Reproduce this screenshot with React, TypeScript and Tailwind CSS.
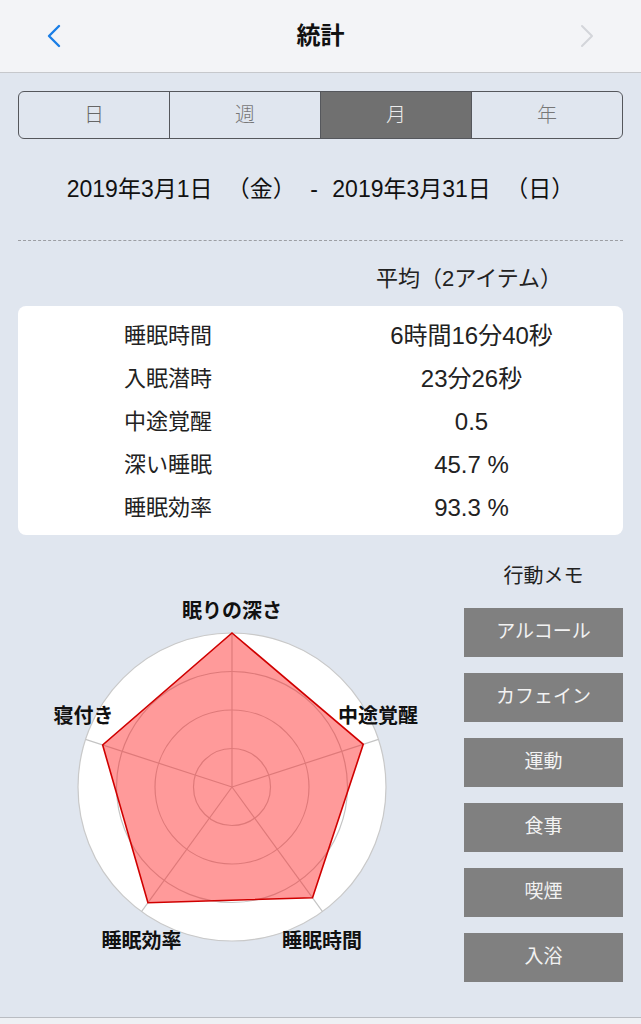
import React from "react";

const rows = [
  ["睡眠時間", "6時間16分40秒"],
  ["入眠潜時", "23分26秒"],
  ["中途覚醒", "0.5"],
  ["深い睡眠", "45.7 %"],
  ["睡眠効率", "93.3 %"],
];

const memos = ["アルコール", "カフェイン", "運動", "食事", "喫煙", "入浴"];

// radar geometry (svg coords)
const CX = 214;
const CY = 252;
const R = 154;
const angles = [0, 72, 144, 216, 288];
const values = [154, 138, 137, 143, 136];

function pt(a: number, r: number) {
  const rad = (a * Math.PI) / 180;
  return [CX + r * Math.sin(rad), CY - r * Math.cos(rad)];
}

function Radar() {
  const poly = angles.map((a, i) => pt(a, values[i]).join(",")).join(" ");
  return (
    <svg width="445" height="482" viewBox="0 0 445 482" className="block">
      <circle cx={CX} cy={CY} r={R} fill="#ffffff" stroke="#c9c9c9" strokeWidth="1.2" />
      {[38.5, 77, 115.5].map((r) => (
        <circle key={r} cx={CX} cy={CY} r={r} fill="none" stroke="#c4c4c4" strokeWidth="1.2" />
      ))}
      {angles.map((a) => {
        const [x, y] = pt(a, R);
        return <line key={a} x1={CX} y1={CY} x2={x} y2={y} stroke="#c4c4c4" strokeWidth="1.2" />;
      })}
      <polygon points={poly} fill="rgba(255,30,30,0.45)" stroke="#d00000" strokeWidth="1.6" strokeLinejoin="miter" />
      <g fontSize="20" fontWeight="700" fill="#111" textAnchor="middle" dominantBaseline="central">
        <text x="214" y="76">眠りの深さ</text>
        <text x="360" y="181">中途覚醒</text>
        <text x="65.5" y="181">寝付き</text>
        <text x="123.5" y="406">睡眠効率</text>
        <text x="304" y="406">睡眠時間</text>
      </g>
    </svg>
  );
}

export default function App() {
  return (
    <div className="w-[641px] h-[1024px] overflow-hidden bg-[#e0e6ef] font-['Liberation_Sans','Noto_Sans_CJK_JP',sans-serif] text-[#111]">
      {/* Nav bar */}
      <div className="h-[73px] bg-[#f3f4f7] border-b border-[#c6c8cc] flex items-center justify-between px-[46px]">
        <svg width="16" height="24" viewBox="0 0 16 24">
          <polyline points="13,2 3,12 13,22" fill="none" stroke="#1a7ee6" strokeWidth="2.4" strokeLinecap="round" strokeLinejoin="round" />
        </svg>
        <div className="text-[24px] font-bold leading-none">統計</div>
        <svg width="16" height="24" viewBox="0 0 16 24">
          <polyline points="3,2 13,12 3,22" fill="none" stroke="#d3d5da" strokeWidth="2" strokeLinecap="round" strokeLinejoin="round" />
        </svg>
      </div>

      <div className="px-[18px]">
        {/* Segmented control */}
        <div className="mt-[18px] h-[48px] flex rounded-[6px] border-[1.5px] border-[#55575c] overflow-hidden text-[20px] font-light">
          <div className="flex-1 flex items-center justify-center text-[#666]">日</div>
          <div className="flex-1 flex items-center justify-center text-[#777] border-l-[1.5px] border-[#55575c]">週</div>
          <div className="flex-1 flex items-center justify-center text-[#ececec] bg-[#707070] border-l-[1.5px] border-[#55575c]">月</div>
          <div className="flex-1 flex items-center justify-center text-[#777] border-l-[1.5px] border-[#55575c]">年</div>
        </div>

        {/* Date range */}
        <div className="h-[101px] flex items-center justify-center text-[23px] [word-spacing:8px]">
          2019年3月1日 （金） - 2019年3月31日 （日）
        </div>

        <div className="border-t border-dashed border-[#9c9ea3]" />

        <div className="pt-[26px] leading-[24px] text-[22px] text-[#222] pl-[358px]">平均（2アイテム）</div>

        {/* Stats card */}
        <div className="mt-[15px] bg-white rounded-[8px] pt-[8px] pb-[6px] text-[22px] text-[#222]">
          {rows.map(([k, v]) => (
            <div key={k} className="h-[43px] flex items-center">
              <div className="w-[302px] pl-[106px]">{k}</div>
              <div className="flex-1 text-center text-[24px]">{v}</div>
            </div>
          ))}
        </div>

        {/* Chart + memos */}
        <div className="h-[482px] flex">
          <div className="flex-1">
            <Radar />
          </div>
          <div className="w-[159px] pt-[29px]">
            <div className="leading-[24px] text-[20px] text-center text-[#222]">行動メモ</div>
            <div className="mt-[20px] flex flex-col gap-[16px]">
              {memos.map((m) => (
                <div key={m} className="h-[49px] bg-[#808080] flex items-center justify-center text-[19px] text-[#f2f2f2]">
                  {m}
                </div>
              ))}
            </div>
          </div>
        </div>
      </div>

      <div className="border-t border-[#b9bcc2] h-[7px] bg-[#eef0f4]" />
    </div>
  );
}
